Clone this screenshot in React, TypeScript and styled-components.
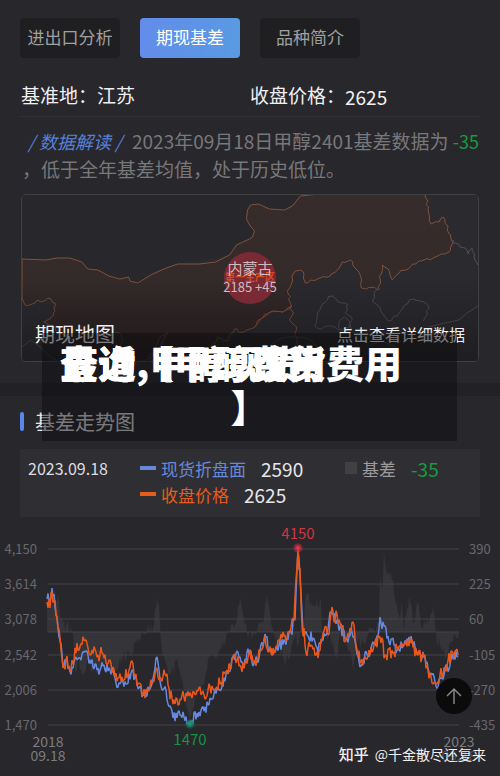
import React from "react";
import styled, { createGlobalStyle } from "styled-components";

const GlobalStyle = createGlobalStyle`
  * { box-sizing: border-box; }
  body {
    margin: 0;
    background: #28272c;
    color: #f0f0f2;
    font-family: "Noto Sans CJK SC", "Noto Sans", sans-serif;
  }
`;

const Page = styled.main`
  position: relative;
  min-height: 100vh;
  background: #28272c;
  overflow: hidden;
`;

const Summary = styled.section`
  padding: 18px 20px 21px;
`;

const Tabs = styled.nav`
  display: flex;
  gap: 20px;
`;

const Tab = styled.button<{ $active?: boolean }>`
  width: 100px;
  height: 40px;
  padding: 0 0 2px;
  border: 0;
  border-radius: 4px;
  font: 400 17px/38px "Noto Sans CJK SC", sans-serif;
  color: ${(p) => (p.$active ? "#ffffff" : "#a0a0a3")};
  background: ${(p) =>
    p.$active ? "linear-gradient(100deg, #638ceb, #599ae2)" : "#1f1f21"};
`;

const Quote = styled.div`
  display: grid;
  grid-template-columns: 1fr 1fr;
  margin-top: 18px;
  padding: 0 1px;
  height: 41px;
  border-bottom: 1px solid #313035;
  font-size: 19px;
  line-height: 38px;
`;

const QuoteCell = styled.div`
  display: flex;
`;

const QuoteValue = styled.span`
  line-height: 42px;
`;

const Reading = styled.p`
  margin: 10px 0 0;
  padding-left: 2px;
  font-size: 19px;
  line-height: 28px;
  color: #78787a;
  white-space: nowrap;
`;

const ReadingTag = styled.em`
  display: inline-block;
  width: 110px;
  padding-left: 6px;
  font-size: 18px;
  color: #5681d8;
`;

const Change = styled.span`
  font-size: 18px;
  color: #169b3e;
`;

const MapCard = styled.a`
  position: relative;
  display: block;
  height: 168px;
  margin: 11px 1px 0;
  border: 1px solid #414045;
  border-radius: 5px;
  overflow: hidden;
  color: #f0f0f2;
  text-decoration: none;
`;

const MapDrawing = styled.svg`
  display: block;
  width: 100%;
  height: 100%;
`;

const Region = styled.div`
  position: absolute;
  top: 57px;
  left: 50%;
  width: 52px;
  height: 52px;
  margin-left: -26px;
  display: flex;
  flex-direction: column;
  align-items: center;
  justify-content: center;
  border-radius: 50%;
  background: #792a34;
  color: #cdbec2;
  white-space: nowrap;
`;

const RegionName = styled.span`
  position: relative;
  z-index: 1;
  font-size: 15px;
  line-height: 18px;
`;

const RegionRank = styled.span`
  margin: -5px 0 -5px;
  font-size: 10px;
  font-weight: 700;
  line-height: 10px;
  color: #dc4a20;
`;

const RegionPrice = styled.span`
  font-size: 13px;
  line-height: 20px;
`;

const MapCaption = styled.div`
  position: absolute;
  inset: auto 13px 13px 13px;
  display: flex;
  align-items: center;
  justify-content: space-between;
  font-size: 20px;
  line-height: 28px;
`;

const MapHint = styled.span`
  font-size: 16px;
`;

const Trend = styled.section`
  border-top: 13px solid #222126;
`;

const TrendTitle = styled.h2`
  display: flex;
  align-items: center;
  gap: 11px;
  margin: 11px 20px 13px;
  font-size: 20px;
  font-weight: 400;
  line-height: 29px;
  color: #e6e6ea;
  &::before {
    content: "";
    width: 4px;
    height: 19px;
    border-radius: 2px;
    background: #5987e8;
  }
`;

const Legend = styled.div`
  display: grid;
  grid-template-columns: 112px 205px 1fr;
  align-items: center;
  grid-auto-rows: 26px;
  margin: 0 20px;
  height: 68px;
  padding: 6px 8px;
  background: #2f2e33;
`;

const LegendDate = styled.time`
  font-size: 16px;
  color: #dddde0;
`;

const LegendItem = styled.div<{ $color: string; $second?: boolean }>`
  grid-column: ${(p) => (p.$second ? "2" : "auto")};
  display: flex;
  align-items: center;
  gap: 5px;
  font-size: 17px;
  color: ${(p) => p.$color};
`;

const Swatch = styled.i<{ $square?: boolean; $color: string }>`
  width: ${(p) => (p.$square ? 12 : 16)}px;
  height: ${(p) => (p.$square ? 12 : 4)}px;
  background: ${(p) => p.$color};
`;

const LegendValue = styled.span<{ $color?: string }>`
  margin-left: 10px;
  font-size: 19px;
  color: ${(p) => p.$color ?? "#e6e6e9"};
`;

const Chart = styled.svg`
  display: block;
  width: 100%;
  margin-top: 3px;
  font-family: "Noto Sans CJK SC", sans-serif;
`;

const Banner = styled.div`
  position: absolute;
  top: 333px;
  left: 42px;
  right: 43px;
  height: 108px;
  padding: 7px 18px;
  background: rgba(12, 12, 13, 0.5);
  color: #ffffff;
  font-size: 38px;
  font-weight: 900;
  line-height: 44px;
`;

const BannerLines = styled.div`
  display: grid;
  white-space: nowrap;
`;

const BannerLine = styled.span`
  grid-area: 1 / 1;
`;

const BannerEnd = styled.div`
  text-align: center;
`;

const ToTop = styled.button`
  position: absolute;
  right: 28px;
  top: 678px;
  width: 36px;
  height: 36px;
  padding: 8px;
  border: 0;
  border-radius: 50%;
  background: #0b0b0c;
  color: #858588;
`;

const Watermark = styled.div`
  position: absolute;
  right: 14px;
  top: 742px;
  display: flex;
  gap: 6px;
  font-size: 14px;
  line-height: 24px;
  color: #eeeeef;
`;

const WatermarkBrand = styled.span`
  font-size: 15px;
  font-weight: 500;
`;

type Point = [number, number];

const noise = (seed: number) => {
  let s = seed;
  return () => {
    s = (s * 16807) % 2147483647;
    return s / 2147483647 - 0.5;
  };
};

const trace = (points: Point[], jitter: number, seed: number) => {
  const next = noise(seed);
  const out: string[] = [];
  points.forEach(([x, y], i) => {
    out.push(`${x} ${y}`);
    const following = points[i + 1];
    if (!following) return;
    const [nx, ny] = following;
    for (let t = x + 1; t < nx; t += 1) {
      const base = y + ((ny - y) * (t - x)) / (nx - x);
      out.push(`${t} ${(base + next() * jitter).toFixed(1)}`);
    }
  });
  return out.join(" L");
};

const rugged = (points: Point[], seed: number) => {
  const next = noise(seed);
  const out: string[] = [];
  points.forEach(([x, y], i) => {
    out.push(`${x} ${y}`);
    const following = points[i + 1];
    if (!following) return;
    const dx = following[0] - x;
    const dy = following[1] - y;
    const steps = Math.floor(Math.hypot(dx, dy) / 3);
    for (let k = 1; k < steps; k += 1) {
      const px = x + (dx * k) / steps + next() * 3;
      const py = y + (dy * k) / steps + next() * 3;
      out.push(`${px.toFixed(1)} ${py.toFixed(1)}`);
    }
  });
  return out.join(" L");
};

const closing: Point[] = [
  [47, 602], [48, 608], [49, 600], [50, 608], [52, 592], [54, 600], [56, 614], [58, 628], [60, 638], [62, 658], [63, 668], [66, 660], [70, 672], [73, 664], [75, 648], [79, 650], [84, 640], [88, 648], [92, 650], [97, 657], [102, 653], [107, 665], [113, 667], [118, 678], [124, 680], [130, 667], [133, 664], [138, 684], [143, 694], [148, 690], [152, 684], [156, 668], [160, 677], [166, 676], [168, 685], [173, 704], [180, 699], [189, 696], [198, 691], [204, 695], [210, 687], [217, 687], [221, 682], [225, 672], [230, 668], [234, 654], [237, 660], [241, 667], [246, 660], [250, 650], [253, 661], [257, 659], [261, 651], [265, 636], [268, 652], [273, 648], [280, 640], [285, 635], [290, 632], [294, 620], [296, 580], [298, 550], [299, 570], [300, 568], [302, 625], [303, 636], [304, 628], [306, 653], [311, 645], [318, 658], [322, 640], [325, 627], [328, 635], [332, 607], [334, 622], [337, 614], [341, 627], [346, 640], [350, 628], [353, 622], [356, 645], [361, 662], [368, 655], [374, 645], [380, 637], [385, 655], [394, 652], [404, 645], [411, 643], [418, 655], [424, 657], [428, 670], [433, 684], [436, 684], [440, 675], [448, 661], [455, 651], [458, 655],
];

const spot: Point[] = [
  [47, 599], [49, 600], [52, 588], [54, 594], [56, 615], [58, 628], [60, 640], [63, 667], [66, 661], [70, 671], [74, 662], [80, 658], [85, 651], [90, 660], [97, 670], [103, 666], [110, 670], [115, 678], [118, 687], [127, 684], [132, 670], [137, 684], [143, 695], [150, 689], [154, 674], [157, 657], [160, 681], [166, 690], [170, 706], [173, 718], [178, 712], [184, 717], [189, 724], [197, 713], [204, 711], [210, 698], [214, 694], [221, 690], [226, 674], [230, 671], [234, 655], [240, 657], [243, 666], [250, 650], [253, 666], [259, 658], [265, 634], [269, 651], [277, 646], [285, 642], [291, 632], [295, 620], [297, 570], [298, 550], [300, 575], [303, 630], [308, 636], [313, 638], [318, 653], [322, 640], [326, 635], [331, 612], [335, 620], [340, 627], [346, 639], [352, 632], [356, 647], [361, 665], [367, 655], [374, 644], [378, 637], [380, 617], [382, 629], [384, 626], [388, 636], [394, 645], [398, 650], [404, 645], [412, 641], [419, 653], [425, 658], [431, 673], [436, 686], [444, 675], [451, 659], [458, 656],
];

const basis: Point[] = [
  [47, 597], [54, 592], [59, 602], [61, 620], [66, 626], [73, 630], [75, 674], [79, 660], [82, 675], [88, 660], [97, 674], [106, 660], [115, 674], [122, 656], [130, 655], [136, 644], [147, 632], [153, 627], [157, 597], [159, 602], [161, 642], [166, 664], [171, 674], [178, 664], [184, 690], [190, 722], [196, 695], [203, 684], [210, 658], [220, 650], [229, 632], [236, 625], [240, 598], [245, 625], [249, 634], [256, 633], [263, 622], [267, 594], [273, 630], [280, 650], [286, 662], [293, 642], [296, 632], [298, 648], [301, 625], [304, 625], [306, 594], [312, 605], [321, 600], [322, 632], [330, 634], [336, 658], [341, 634], [347, 642], [353, 671], [358, 642], [365, 644], [370, 628], [375, 632], [379, 620], [380, 575], [382, 590], [384, 550], [387, 575], [391, 572], [395, 600], [400, 620], [402, 602], [404, 630], [409, 597], [414, 622], [418, 601], [422, 628], [430, 618], [433, 605], [436, 634], [442, 652], [446, 658], [452, 642], [459, 633],
];

const northBorder: Point[] = [
  [22, 259], [46, 260], [57, 258], [70, 258], [82, 262], [88, 269], [98, 270], [109, 276], [120, 279], [129, 277], [130, 281], [138, 283], [151, 275], [164, 269], [178, 264], [200, 264], [216, 262], [230, 255], [237, 245], [250, 239], [253, 237], [255, 231], [250, 225], [247, 219], [248, 210], [251, 205], [259, 204], [270, 209], [285, 210], [293, 206], [301, 196], [320, 194], [427, 194],
];

const eastBorder: Point[] = [
  [427, 194], [429, 210], [432, 224], [440, 222], [444, 217], [449, 226], [452, 239], [454, 243], [450, 252], [442, 254], [434, 258], [420, 261], [409, 269], [400, 273], [393, 280], [389, 269], [383, 265], [380, 289], [362, 288], [359, 271], [351, 260], [343, 262], [338, 270], [331, 276], [318, 279], [306, 283], [304, 272], [296, 271], [292, 284], [288, 291], [292, 306], [283, 312], [271, 312], [261, 319], [254, 328], [244, 332], [235, 329], [228, 341], [218, 337], [212, 347], [202, 349], [193, 361],
];

const southBorder: Point[] = [
  [151, 361], [158, 342], [168, 333], [161, 346], [145, 361], [90, 361], [70, 338], [44, 322], [53, 316], [56, 304], [48, 298], [35, 303], [25, 305], [22, 297],
];

const capital: Point[] = [
  [333, 296], [326, 302], [321, 309], [318, 316], [315, 325], [322, 329], [332, 326], [341, 330], [350, 328], [353, 319], [346, 313], [348, 304], [339, 302], [333, 296],
];

const coast: Point[] = [
  [378, 289], [373, 301], [381, 308], [386, 317], [389, 321], [398, 316], [404, 307], [414, 299], [425, 302], [430, 308], [424, 321],
];

const farEast: Point[] = [
  [454, 240], [461, 247], [466, 248], [469, 254], [473, 248], [475, 257], [479, 265],
];

const gridLines = [
  { y: 549, left: "4,150", right: "390" },
  { y: 584, left: "3,614", right: "225" },
  { y: 619, left: "3,078", right: "60" },
  { y: 655, left: "2,542", right: "-105" },
  { y: 690, left: "2,006", right: "-270" },
  { y: 725, left: "1,470", right: "-435" },
];

const land = `M${northBorder.map((p) => p.join(" ")).join(" L")} L${rugged(eastBorder, 17)} L${rugged(southBorder, 29)}Z`;

const RegionMap = () => (
  <MapDrawing viewBox="22 195 457 166" preserveAspectRatio="none" fill="none" aria-hidden="true">
    <defs>
      <linearGradient id="land" x1="0" y1="0" x2="0" y2="1">
        <stop offset="0" stopColor="#362c2b" />
        <stop offset="0.55" stopColor="#342a2a" />
        <stop offset="1" stopColor="#2f1c1e" />
      </linearGradient>
      <linearGradient id="shade" x1="0" y1="0" x2="0" y2="1">
        <stop offset="0" stopColor="#17171a" stopOpacity="0" />
        <stop offset="1" stopColor="#17171a" stopOpacity="0.6" />
      </linearGradient>
    </defs>
    <path d="M22 195H479V361H22Z" fill="#2a2a2f" />
    <path d="M22 195H301L285 210 250 205 255 235 230 255 178 264 138 283 88 269 22 259Z" fill="#28272c" />
    <path d={land} fill="url(#land)" stroke="#82523b" strokeLinejoin="bevel" />
    <g stroke="#515156">
      <path d={`M${rugged(farEast, 5)}`} />
      <path d={`M${rugged(coast, 11)}`} />
      <path d={`M${rugged(capital, 23)}`} />
      <path d="M340 321 l5 -4 5 4 2 8 -8 3 -5 -5Z M22 347 L31 340 39 346 48 355 57 361" />
      <path d="M430 327 L446 323 460 320 468 313 479 306" />
      <path d="M115 333 Q121 330 123 341 L118 350 M270 346 Q281 335 298 337 Q315 337 320 352 M370 345 L383 341 398 348 400 361" />
    </g>
    <path d={`M${rugged([[292, 306], [293, 315], [290, 320], [297, 327], [295, 334], [298, 342], [297, 348]], 41)}`} stroke="#a34e29" />
    <path d={`M${rugged([[292, 306], [283, 312], [271, 312], [261, 319], [254, 328]], 43)}`} stroke="#a34e29" />
    <path d="M22 275H479V361H22Z" fill="url(#shade)" />
  </MapDrawing>
);

const TrendChart = () => (
  <Chart viewBox="0 520 500 256" role="img" aria-label="基差走势图">
    <defs>
      <radialGradient id="peak">
        <stop offset="0" stopColor="#fa405b" />
        <stop offset="0.4" stopColor="#d53045" stopOpacity="0.85" />
        <stop offset="1" stopColor="#b32a3b" stopOpacity="0.25" />
      </radialGradient>
      <radialGradient id="trough">
        <stop offset="0" stopColor="#17a982" />
        <stop offset="0.5" stopColor="#178268" stopOpacity="0.85" />
        <stop offset="1" stopColor="#176850" stopOpacity="0.25" />
      </radialGradient>
    </defs>
    <g stroke="#3b3a3f" strokeWidth="1.3">
      {gridLines.map((g) => (
        <path key={g.y} d={`M48 ${g.y}H459`} />
      ))}
      <path d="M48 632H459" />
    </g>
    <path d={`M47 632 L${trace(basis, 14, 91)} L459 632Z`} fill="#454548" fillOpacity="0.45" />
    <g fill="none" strokeWidth="1.5" strokeLinejoin="bevel">
      <path d={`M${trace(spot, 12, 37)}`} stroke="#6689de" />
      <path d={`M${trace(closing, 14, 53)}`} stroke="#eb571b" />
    </g>
    <circle cx="298" cy="548" r="5" fill="url(#peak)" />
    <circle cx="190" cy="724" r="5" fill="url(#trough)" />
    <g fill="#68686b" fontSize="13">
      {gridLines.map((g) => (
        <React.Fragment key={g.y}>
          <text x="37" y={g.y + 5} textAnchor="end">{g.left}</text>
          <text x="469" y={g.y + 5}>{g.right}</text>
        </React.Fragment>
      ))}
    </g>
    <g fill="#7c7c7f" fontSize="14" textAnchor="middle">
      <text x="48" y="747">2018</text>
      <text x="48" y="761">09.18</text>
      <text x="459" y="747">2023</text>
      <text x="459" y="761" opacity="0.5">09.18</text>
    </g>
    <g fontSize="15" textAnchor="middle">
      <text x="298" y="539" fill="#cf3640">4150</text>
      <text x="190" y="745" fill="#169440">1470</text>
    </g>
  </Chart>
);

export default function App() {
  return (
    <Page>
      <GlobalStyle />
      <Summary>
        <Tabs>
          <Tab>进出口分析</Tab>
          <Tab $active>期现基差</Tab>
          <Tab>品种简介</Tab>
        </Tabs>
        <Quote>
          <QuoteCell>基准地：江苏</QuoteCell>
          <QuoteCell>收盘价格：<QuoteValue>2625</QuoteValue></QuoteCell>
        </Quote>
        <Reading>
          <ReadingTag>/ 数据解读 /</ReadingTag>
          2023年09月18日甲醇2401基差数据为 <Change>-35</Change>
          <br />
          ，低于全年基差均值，处于历史低位。
        </Reading>
        <MapCard href="#map">
          <RegionMap />
          <Region>
            <RegionName>内蒙古</RegionName>
            <RegionRank>第一生产区</RegionRank>
            <RegionPrice>2185 +45</RegionPrice>
          </Region>
          <MapCaption>
            <span>期现地图</span>
            <MapHint>点击查看详细数据</MapHint>
          </MapCaption>
        </MapCard>
      </Summary>
      <Trend>
        <TrendTitle>基差走势图</TrendTitle>
        <Legend>
          <LegendDate>2023.09.18</LegendDate>
          <LegendItem $color="#6689d8">
            <Swatch $color="#6689d8" />现货折盘面<LegendValue>2590</LegendValue>
          </LegendItem>
          <LegendItem $color="#9b9b9e">
            <Swatch $square $color="#414044" />基差<LegendValue $color="#169b3e">-35</LegendValue>
          </LegendItem>
          <LegendItem $second $color="#e75b1c">
            <Swatch $color="#e75b1c" />收盘价格<LegendValue>2625</LegendValue>
          </LegendItem>
        </Legend>
        <TrendChart />
      </Trend>
      <Banner>
        <BannerLines>
          <BannerLine>查询【甲醇现货费用</BannerLine>
          <BannerLine>最近,甲醇现货</BannerLine>
          <BannerLine>查询【甲醇费用</BannerLine>
        </BannerLines>
        <BannerEnd>】</BannerEnd>
      </Banner>
      <ToTop aria-label="返回顶部">
        <svg width="20" height="20" viewBox="0 0 20 20" fill="none" stroke="currentColor" strokeWidth="1.5">
          <path d="M10 18V3M3 10l7-7 7 7" />
        </svg>
      </ToTop>
      <Watermark>
        <WatermarkBrand>知乎</WatermarkBrand>
        <span>@千金散尽还复来</span>
      </Watermark>
    </Page>
  );
}
